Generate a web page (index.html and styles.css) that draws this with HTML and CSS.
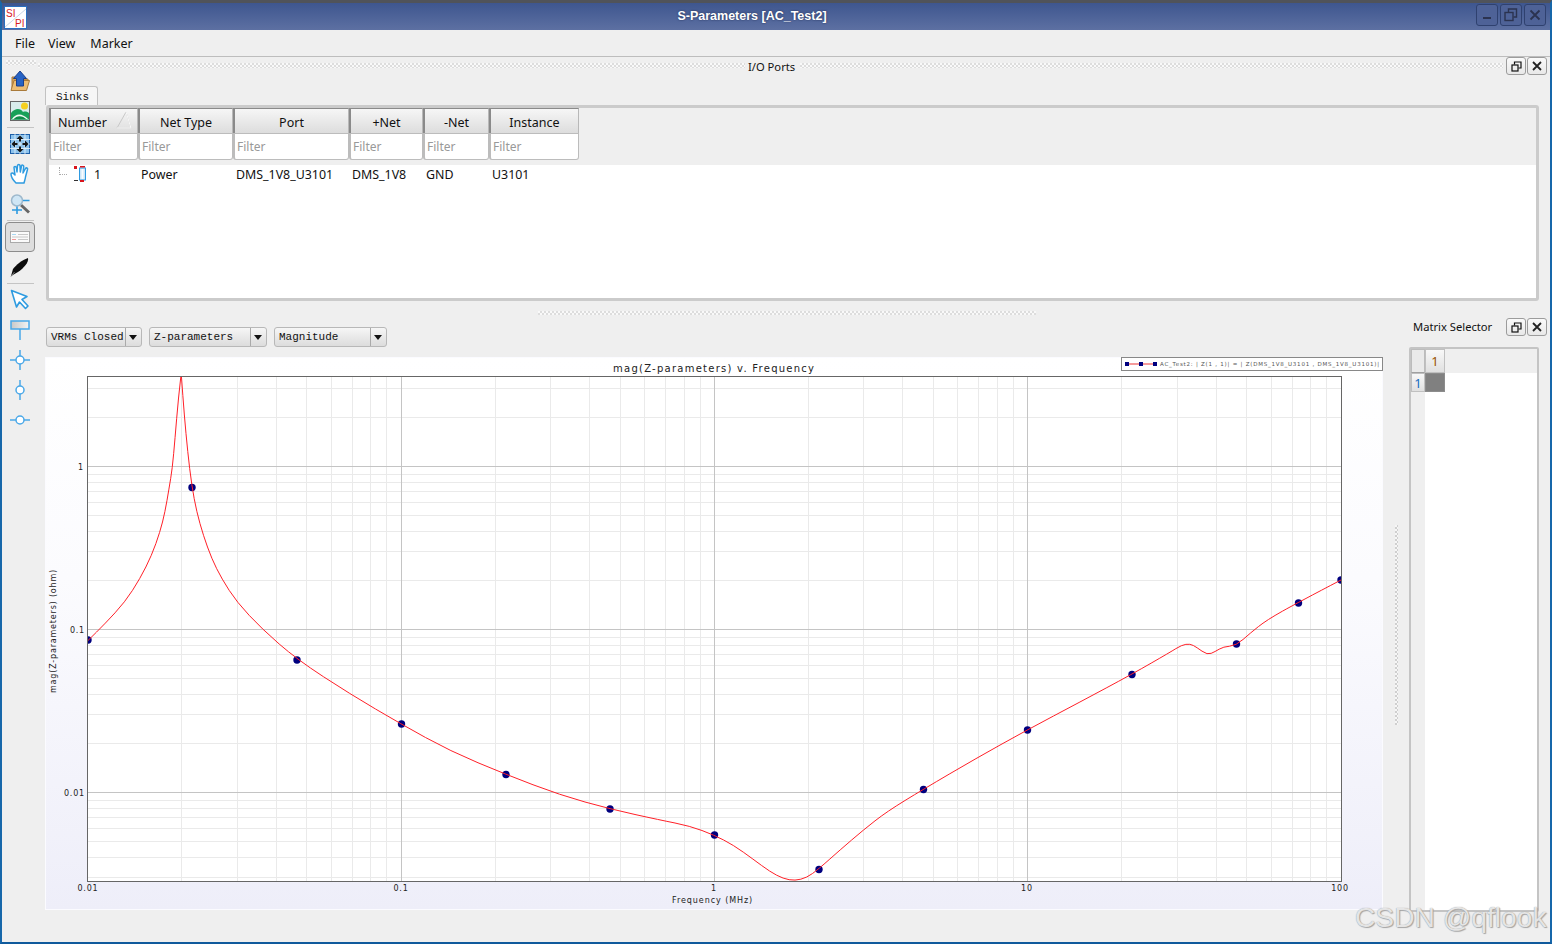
FILE: index.html
```html
<!DOCTYPE html>
<html lang="en">
<head>
<meta charset="utf-8">
<title>S-Parameters [AC_Test2]</title>
<link rel="stylesheet" href="styles.css">
</head>
<body>
<div class="window">
  <header class="titlebar">
    <svg class="applogo" width="23" height="23" viewBox="0 0 23 23">
      <rect x="0.5" y="0.5" width="22" height="22" fill="#fff" stroke="#2a6fc0"/>
      <path d="M1 21 L22 3" stroke="#c8d4e4" stroke-width="1"/>
      <text x="2" y="11" class="logotext">SI</text>
      <text x="11" y="21" class="logotext">PI</text>
    </svg>
    <div class="apptitle">S-Parameters [AC_Test2]</div>
    <div class="winbtns">
      <button class="winbtn"><svg width="12" height="12" viewBox="0 0 12 12"><rect x="2" y="8" width="8" height="2" fill="#2b3350"/></svg></button>
      <button class="winbtn"><svg width="14" height="14" viewBox="0 0 14 14" fill="none" stroke="#2b3350" stroke-width="1.4"><rect x="1" y="4.5" width="8" height="8"/><path d="M4.5 4 V1 H12.5 V9 H9.5"/></svg></button>
      <button class="winbtn"><svg width="12" height="12" viewBox="0 0 12 12" fill="none" stroke="#2b3350" stroke-width="1.8"><path d="M1.5 1.5 L10.5 10.5 M10.5 1.5 L1.5 10.5"/></svg></button>
    </div>
  </header>

  <nav class="menubar">
    <span class="menuitem">File</span>
    <span class="menuitem">View</span>
    <span class="menuitem">Marker</span>
  </nav>

  <div class="main">
    <aside class="toolbar">
      <div class="handle toolhandle"></div>
      <div class="tool"><svg width="20" height="22" viewBox="0 0 20 22"><path d="M2 20.5 V7 H7 L9 9 H18 V12 Z" fill="#d9a050" stroke="#a97a3a"/><path d="M1 20.5 L4 10.5 H19.5 L16.5 20.5 Z" fill="#ecbd74" stroke="#a97a3a"/><path d="M10 1 L16.5 8.5 H13.5 V16 H6.5 V8.5 H3.5 Z" fill="#2763c4" stroke="#1b3f8a"/></svg></div>
      <div class="tool"><svg width="20" height="20" viewBox="0 0 20 20"><rect x="0.5" y="0.5" width="19" height="19" fill="#d8ecec" stroke="#666"/><circle cx="14.5" cy="5" r="3.5" fill="#f5d020"/><path d="M1 18.5 V12 C6 6 11 8 13 11 C15 10 18 11 19 12 V18.5 Z" fill="#18a058"/><path d="M2 18 C6 12 12 12 18 18 Z" fill="#f4fbf6"/><path d="M3 18.5 C7 14 12 14 17 18.5 Z" fill="#0f8a48"/></svg></div>
      <div class="toolsep"></div>
      <div class="tool"><svg width="20" height="20" viewBox="0 0 20 20"><rect x="0.5" y="0.5" width="19" height="19" fill="#8ec3ec" stroke="#1d5fa8"/><path d="M0 5.5 H20 M0 10 H20 M0 14.5 H20 M5 0 V20 M10 0 V20 M15 0 V20" stroke="#eaf4fb" stroke-width="0.8"/><path d="M10 1.5 L13.5 5 H11 V7.5 H9 V5 H6.5 Z M10 18.5 L13.5 15 H11 V12.5 H9 V15 H6.5 Z M1.5 10 L5 6.5 V9 H7.5 V11 H5 V13.5 Z M18.5 10 L15 6.5 V9 H12.5 V11 H15 V13.5 Z" fill="#151515"/></svg></div>
      <div class="tool"><svg width="20" height="22" viewBox="0 0 20 22"><path d="M6 20 C3 17 1 13 1 11 C1 9.5 3 9.5 4 11 L5 12 L4 4.5 C4 3 6 3 6.3 4.5 L7 9 L7.5 2.5 C7.8 1 9.7 1 10 2.5 L10.3 9 L11.5 3 C12 1.5 13.8 2 13.7 3.5 L13 10 L15.5 5.5 C16.3 4.3 18 5 17.5 6.5 L15.5 14 C15 17 14.5 18 14 20 Z" fill="#fff" stroke="#2e9be0" stroke-width="1.5" stroke-linejoin="round"/></svg></div>
      <div class="tool"><svg width="20" height="21" viewBox="0 0 20 21"><path d="M11 11 L19 18.5" stroke="#666" stroke-width="3"/><circle cx="7" cy="6.5" r="5.5" fill="#cfe6f5" stroke="#9db8cc" stroke-width="1.5"/><path d="M13 6.5 H19.5 M2 16 H12 M7 12.5 V20" stroke="#2e9be0" stroke-width="1.6"/></svg></div>
      <div class="toolsep"></div>
      <div class="tool active"><svg width="20" height="12" viewBox="0 0 20 12"><rect x="0.5" y="0.5" width="19" height="11" fill="#fbfbfb" stroke="#aaa"/><path d="M2 3.5 H6" stroke="#a8d8f4"/><path d="M8 3.5 H18 M2 6 H18 M8 8.5 H18" stroke="#c8c8c8"/><path d="M2 8.5 H6" stroke="#f49898"/></svg></div>
      <div class="tool"><svg width="20" height="22" viewBox="0 0 20 22"><path d="M1 20 L3 13 C6 9 12 4 18 2 C19 6 14 12 8 16 Z" fill="#0c0c0c"/><path d="M1 20.5 L4.5 16" stroke="#777"/></svg></div>
      <div class="toolsep"></div>
      <div class="tool"><svg width="20" height="23" viewBox="0 0 20 23"><path d="M1.5 1.5 L17 7.5 L12 10.5 L18 17 L15.5 19.5 L9.5 13 L6.5 18 Z" fill="#fff" stroke="#2e9be0" stroke-width="1.6" stroke-linejoin="round"/></svg></div>
      <div class="tool"><svg width="20" height="20" viewBox="0 0 20 20"><defs><linearGradient id="tbar" x1="0" x2="1" y1="0" y2="0"><stop offset="0" stop-color="#c8c8c8"/><stop offset="1" stop-color="#f4f4f4"/></linearGradient></defs><rect x="1" y="1" width="18" height="8" fill="url(#tbar)" stroke="#4aa8e8" stroke-width="1.5"/><path d="M10 9 V20" stroke="#4aa8e8" stroke-width="1.5"/></svg></div>
      <div class="tool"><svg width="20" height="20" viewBox="0 0 20 20"><path d="M0 10 H20 M10 0 V20" stroke="#4aa8e8" stroke-width="1.5"/><circle cx="10" cy="10" r="4" fill="#fff" stroke="#4aa8e8" stroke-width="1.5"/></svg></div>
      <div class="tool"><svg width="20" height="20" viewBox="0 0 20 20"><path d="M10 0 V20" stroke="#4aa8e8" stroke-width="1.5"/><circle cx="10" cy="10" r="4" fill="#fff" stroke="#4aa8e8" stroke-width="1.5"/></svg></div>
      <div class="tool"><svg width="20" height="20" viewBox="0 0 20 20"><path d="M0 10 H20" stroke="#4aa8e8" stroke-width="1.5"/><circle cx="10" cy="10" r="4" fill="#fff" stroke="#4aa8e8" stroke-width="1.5"/></svg></div>
    </aside>

    <div class="content">
      <div class="dockhead">
        <div class="handle handle-left"></div>
        <span class="docktitle">I/O Ports</span>
        <div class="handle grow"></div>
        <div class="dockbtns">
          <button class="dockbtn"><svg width="11" height="11" viewBox="0 0 11 11" fill="none" stroke="#111" stroke-width="1.2"><rect x="1" y="4" width="6" height="6"/><path d="M3.5 3.5 V1 H10 V7 H7.5"/></svg></button>
          <button class="dockbtn"><svg width="10" height="10" viewBox="0 0 10 10" fill="none" stroke="#222" stroke-width="1.8"><path d="M1 1 L9 9 M9 1 L1 9"/></svg></button>
        </div>
      </div>

      <div class="tabs"><div class="tab">Sinks</div></div>

      <section class="tableframe">
        <div class="thead">
          <div class="col col-number">
            <div class="th th-left">Number<svg class="sort" width="16" height="18" viewBox="0 0 16 18"><path d="M1 17 L10 1 L15 17 Z" fill="none" stroke="#c8c8c8"/><path d="M1 17 L15 17 L10 1" fill="none" stroke="#fafafa"/></svg></div>
            <div class="filter">Filter</div>
          </div>
          <div class="col col-type"><div class="th">Net Type</div><div class="filter">Filter</div></div>
          <div class="col col-port"><div class="th">Port</div><div class="filter">Filter</div></div>
          <div class="col col-pnet"><div class="th">+Net</div><div class="filter">Filter</div></div>
          <div class="col col-nnet"><div class="th">-Net</div><div class="filter">Filter</div></div>
          <div class="col col-inst"><div class="th">Instance</div><div class="filter">Filter</div></div>
        </div>
        <div class="tbody">
          <div class="row">
            <div class="cell col-number cell-first">
              <span class="treeline"></span>
              <svg class="sinkicon" width="14" height="16" viewBox="0 0 14 16"><rect x="6.5" y="2" width="6" height="12" fill="#cfe6f7" stroke="#2f9ae0"/><rect x="8.5" y="3" width="2" height="10" fill="#f8fcff"/><rect x="1" y="0" width="3" height="3" fill="#d8141c"/><rect x="7" y="0" width="5" height="1.5" fill="#d8141c"/><rect x="7" y="14" width="4" height="2" fill="#d8141c"/><rect x="1" y="14" width="4" height="1" fill="#333"/></svg>
              <span>1</span>
            </div>
            <div class="cell col-type">Power</div>
            <div class="cell col-port">DMS_1V8_U3101</div>
            <div class="cell col-pnet">DMS_1V8</div>
            <div class="cell col-nnet">GND</div>
            <div class="cell col-inst">U3101</div>
          </div>
        </div>
      </section>

      <div class="splitter"><div class="handle splithandle"></div></div>

      <div class="lower">
        <div class="plotcol">
          <div class="combos">
            <div class="combo combo-vrm"><span class="combotext">VRMs Closed</span><span class="comboarrow"></span></div>
            <div class="combo combo-z"><span class="combotext">Z-parameters</span><span class="comboarrow"></span></div>
            <div class="combo combo-mag"><span class="combotext">Magnitude</span><span class="comboarrow"></span></div>
          </div>
          <div class="plot">
            <svg class="plotsvg" width="1338" height="553" viewBox="45 357 1338 553">
              <defs>
                <clipPath id="plotclip"><rect x="87" y="376" width="1254" height="505"/></clipPath>
                <g id="xd" stroke="#eaeaea" shape-rendering="crispEdges">
                  <path d="M94.3 376 V881 M149.5 376 V881 M188.7 376 V881 M219.1 376 V881 M243.9 376 V881 M264.8 376 V881 M283 376 V881 M299 376 V881"/>
                </g>
                <g id="yd" stroke="#eaeaea" shape-rendering="crispEdges">
                  <path d="M88 -49 H1341 M88 -77.8 H1341 M88 -98.1 H1341 M88 -113.9 H1341 M88 -126.8 H1341 M88 -137.8 H1341 M88 -147.2 H1341 M88 -155.5 H1341"/>
                </g>
              </defs>
              <rect x="87.5" y="376.5" width="1254" height="505" fill="#fff"/>
              <g clip-path="url(#plotclip)">
                <use href="#xd" x="87.5"/><use href="#xd" x="401"/><use href="#xd" x="714"/><use href="#xd" x="1027.5"/>
                <use href="#yd" y="466.5"/><use href="#yd" y="629.5"/><use href="#yd" y="792.5"/><use href="#yd" y="955.5"/>
                <path d="M401.5 376 V881 M714.5 376 V881 M1027.5 376 V881 M88 466.5 H1341 M88 629.5 H1341 M88 792.5 H1341" stroke="#c4c4c4" shape-rendering="crispEdges"/>
                <g fill="#00007f">
                  <circle cx="88" cy="640" r="3.7"/><circle cx="192" cy="487.5" r="3.7"/><circle cx="297" cy="660" r="3.7"/><circle cx="401.5" cy="724" r="3.7"/><circle cx="506" cy="774.5" r="3.7"/><circle cx="610" cy="809" r="3.7"/><circle cx="714.5" cy="835" r="3.7"/><circle cx="819" cy="869.5" r="3.7"/><circle cx="923.5" cy="789.5" r="3.7"/><circle cx="1027.5" cy="730" r="3.7"/><circle cx="1132" cy="674.5" r="3.7"/><circle cx="1236.5" cy="644" r="3.7"/><circle cx="1298.5" cy="603" r="3.7"/><circle cx="1341" cy="580" r="3.7"/>
                </g>
                <path class="curve" d="M88 640.5 L96.5 632.1 Q105 623.7 115 612.85 Q125 602 132.5 590.35 Q140 578.7 145.85 567 Q151.7 555.3 155.85 543.65 Q160 532 162.5 522 Q165 512 167 500.35 Q169 488.7 170.65 478.7 Q172.3 468.7 173.65 453.7 Q175 438.7 176.65 418.7 Q178.3 398.7 180.9 376 L181.4 376 L182.85 395.65 Q184.3 415.3 186 433.65 Q187.7 452 189.7 468.65 Q191.7 485.3 194.2 498.65 Q196.7 512 200 523.65 Q203.3 535.3 207.5 547 Q211.7 558.7 216.7 568.7 Q221.7 578.7 229.2 590.35 Q236.7 602 249.2 615.35 Q261.7 628.7 279.2 644 Q296.7 659.3 323.35 676.65 Q350 694 375.5 709 Q401 724 425.5 737.5 Q450 751 478 762.75 Q506 774.5 533 784.75 Q560 795 585 802 Q610 809 635 814.5 Q660 820 675 823 Q690 826 702 830.5 Q714 835 723.65 840 Q733.3 845 743.3 852.15 Q753.3 859.3 761.65 865.5 Q770 871.7 776.65 875.2 Q783.3 878.7 789.15 879.7 Q795 880.7 800.85 879.2 Q806.7 877.7 812.5 873.5 Q818.3 869.3 829.15 859.65 Q840 850 851.65 840 Q863.3 830 875 820.85 Q886.7 811.7 905 800.5 Q923.3 789.3 949.15 774.15 Q975 759 1001 744.5 Q1027 730 1053.5 716 Q1080 702 1106.15 688 Q1132.3 674 1151.15 663.15 Q1170 652.3 1175.85 648.65 Q1181.7 645 1185.85 644.35 Q1190 643.7 1193.35 645.5 Q1196.7 647.3 1202 651.15 Q1207.3 655 1211.15 653.35 Q1215 651.7 1219.15 649.2 Q1223.3 646.7 1229.65 646.2 Q1236 645.7 1243 639.5 Q1250 633.3 1258.35 626.65 Q1266.7 620 1282.5 611.15 Q1298.3 602.3 1341 580"/>
              </g>
              <rect x="87.5" y="376.5" width="1254" height="505" fill="none" stroke="#666" shape-rendering="crispEdges"/>

              <g class="charttext">
                <text x="613" y="372" class="ctitle" textLength="202">mag(Z-parameters) v. Frequency</text>
                <text x="84" y="470" text-anchor="end">1</text>
                <text x="85" y="633" text-anchor="end">0.1</text>
                <text x="85" y="796" text-anchor="end">0.01</text>
                <text x="88" y="891" text-anchor="middle">0.01</text>
                <text x="401" y="891" text-anchor="middle">0.1</text>
                <text x="714" y="891" text-anchor="middle">1</text>
                <text x="1027" y="891" text-anchor="middle">10</text>
                <text x="1340" y="891" text-anchor="middle">100</text>
                <text x="672" y="903" textLength="81">Frequency (MHz)</text>
                <text transform="translate(56 693) rotate(-90)" textLength="124">mag(Z-parameters) (ohm)</text>
              </g>

              <rect x="1121.5" y="357.5" width="261" height="13" fill="#fff" stroke="#888" shape-rendering="crispEdges"/>
              <path d="M1126 364 H1156" stroke="#f59a9a" stroke-width="2"/>
              <path d="M1125 362 h4 v4 h-4 Z M1139 362 h4 v4 h-4 Z M1153 362 h4 v4 h-4 Z" fill="#00007f"/>
              <text x="1160" y="366" class="legendtext" textLength="219">AC_Test2: | Z(1 , 1)| = | Z(DMS_1V8_U3101 , DMS_1V8_U3101)|</text>
            </svg>
          </div>
        </div>

        <div class="vsplit"><div class="vhandle"></div></div>

        <div class="matrixcol">
          <div class="matrixhead">
            <span class="matrixtitle">Matrix Selector</span>
            <div class="dockbtns">
              <button class="dockbtn"><svg width="11" height="11" viewBox="0 0 11 11" fill="none" stroke="#111" stroke-width="1.2"><rect x="1" y="4" width="6" height="6"/><path d="M3.5 3.5 V1 H10 V7 H7.5"/></svg></button>
              <button class="dockbtn"><svg width="10" height="10" viewBox="0 0 10 10" fill="none" stroke="#222" stroke-width="1.8"><path d="M1 1 L9 9 M9 1 L1 9"/></svg></button>
            </div>
          </div>
          <div class="matrix">
            <div class="mrow mrow-top">
              <div class="mcorner"></div>
              <div class="mhead mhead-col">1</div>
            </div>
            <div class="mrow-body">
              <div class="mleft"><div class="mhead mhead-row">1</div></div>
              <div class="mcell"></div>
            </div>
          </div>
        </div>
      </div>
    </div>
  </div>
</div>
<div class="watermark">CSDN @qflook</div>
</body>
</html>
```
FILE: styles.css
```css
* { box-sizing: border-box; }
html, body { margin: 0; padding: 0; }
body {
  width: 1552px;
  height: 944px;
  overflow: hidden;
  background: #efefef;
  font-family: "Noto Sans", "Liberation Sans", sans-serif;
  font-size: 12px;
  color: #111;
  position: relative;
}
button { padding: 0; margin: 0; font: inherit; }

.window {
  width: 1552px;
  height: 944px;
  display: flex;
  flex-direction: column;
  border-style: solid;
  border-color: #50535a #1767aa #0f5a9c #1767aa;
  border-width: 3px 2px 2px 2px;
  background: #efefef;
}

/* title bar */
.titlebar {
  height: 27px;
  flex: none;
  display: flex;
  align-items: center;
  background: linear-gradient(#3e568f, #5d70a2);
  padding-left: 2px;
}
.applogo { flex: none; margin-top: 1px; }
.logotext {
  font-family: "Liberation Sans", sans-serif;
  font-size: 10px;
  fill: #d81c24;
}
.apptitle {
  flex: 1;
  text-align: center;
  padding-left: 1px;
  padding-bottom: 1px;
  color: #fff;
  font-family: "Liberation Sans", sans-serif;
  font-weight: bold;
  font-size: 12.5px;
  text-shadow: 0 0 2px #202c50;
}
.winbtns { display: flex; gap: 2px; margin-right: 4px; margin-top: -3px; }
.winbtn {
  width: 22px;
  height: 22px;
  display: flex;
  align-items: center;
  justify-content: center;
  background: #4e6297;
  border: 1px solid #2f416f;
  border-radius: 3px;
}

/* menu */
.menubar {
  height: 27px;
  flex: none;
  display: flex;
  align-items: center;
  border-bottom: 1px solid #bdbdbd;
  padding-left: 13px;
  font-size: 12.5px;
  gap: 15px;
}
.menuitem:first-child { width: 18px; }

/* main */
.main { flex: 1; display: flex; min-height: 0; }

.toolbar {
  width: 36px;
  flex: none;
  display: flex;
  flex-direction: column;
  align-items: center;
  padding-top: 3px;
}
.handle {
  height: 5px;
  background: repeating-conic-gradient(#dddddd 0 25%, #f9f9f9 0 50%) 0 0 / 4px 4px;
}
.toolhandle { width: 30px; margin-bottom: 1px; flex: none; margin-left: 2px; }
.tool {
  width: 30px;
  height: 30px;
  flex: none;
  display: flex;
  align-items: center;
  justify-content: center;
}
.tool.active {
  background: #dedede;
  border: 1px solid #8c8c8c;
  border-radius: 4px;
}
.toolsep {
  width: 27px;
  height: 3px;
  flex: none;
  background: linear-gradient(transparent 1px, #c4c4c4 1px, #c4c4c4 2px, transparent 2px);
}

.content { flex: 1; min-width: 0; display: flex; flex-direction: column; }

.dockhead {
  height: 29px;
  flex: none;
  display: flex;
  align-items: flex-start;
  padding-right: 3px;
}
.handle.handle-left { width: 707px; flex: none; margin-top: 6px; }
.handle.grow { flex: 1; margin-top: 6px; }
.docktitle {
  font-size: 11.2px;
  line-height: 16px;
  margin: 2px 5px 0 3px;
}
.dockbtns { display: flex; gap: 1px; margin-left: 3px; }
.dockbtn {
  width: 20px;
  height: 18px;
  display: flex;
  align-items: center;
  justify-content: center;
  background: linear-gradient(#fafafa, #e8e8e8);
  border: 1px solid #9c9c9c;
  border-radius: 3px;
}

/* tabs */
.tabs { height: 19px; flex: none; padding-left: 7px; display: flex; }
.tab {
  width: 53px;
  height: 19px;
  font-family: "Liberation Mono", monospace;
  font-size: 11px;
  line-height: 20px;
  padding-left: 10px;
  background: #f6f6f6;
  border: 1px solid #c2c2c2;
  border-bottom: none;
  border-radius: 3px 3px 0 0;
}

/* table */
.tableframe {
  width: 1493px;
  height: 196px;
  flex: none;
  margin-left: 8px;
  border: 3px solid #cbcbcb;
  border-radius: 3px;
  display: flex;
  flex-direction: column;
}
.thead { height: 57px; flex: none; display: flex; }
.col { display: flex; flex-direction: column; }
.col-number { width: 89px; }
.col-type { width: 95px; }
.col-port { width: 116px; }
.col-pnet { width: 74px; }
.col-nnet { width: 66px; }
.col-inst { width: 90px; }
.th {
  height: 25px;
  flex: none;
  display: flex;
  align-items: center;
  justify-content: center;
  font-size: 12.5px;
  background: linear-gradient(#f6f6f6, #dddddd);
  border-top: 1px solid #8a8a8a;
  border-left: 2px solid #8a8a8a;
  border-right: 1px solid #b8b8b8;
  padding-top: 2px;
}
.th-left { justify-content: flex-start; padding-left: 7px; position: relative; }
.sort { position: absolute; left: 65px; top: 2px; }
.filter {
  height: 27px;
  flex: none;
  background: #fff;
  border: 1px solid #bcbcbc;
  border-left-width: 2px;
  border-radius: 0 0 3px 3px;
  color: #999;
  font-size: 12px;
  line-height: 26px;
  padding-left: 2px;
}
.tbody { flex: 1; background: #fff; }
.row { display: flex; height: 18px; }
.cell {
  font-size: 12.4px;
  line-height: 19px;
  padding-left: 3px;
  flex: none;
  white-space: nowrap;
}
.cell-first { display: flex; padding-left: 10px; }
.treeline {
  width: 8px;
  height: 8px;
  margin-top: 2px;
  border-left: 1px dotted #aaa;
  border-bottom: 1px dotted #aaa;
  flex: none;
}
.sinkicon { margin: 1px 7px 0 6px; flex: none; }

/* splitter */
.splitter { height: 17px; flex: none; display: flex; justify-content: center; padding-top: 10px; }
.splithandle { width: 498px; height: 4px; margin-right: 14px; }

/* lower */
.lower { flex: 1; display: flex; min-height: 0; padding-left: 7px; }
.plotcol { width: 1338px; flex: none; display: flex; flex-direction: column; padding-top: 9px; }
.combos { height: 20px; flex: none; display: flex; gap: 7px; padding-left: 1px; margin-bottom: 10px; }
.combo {
  height: 20px;
  display: flex;
  background: linear-gradient(#f6f6f6, #dcdcdc);
  border: 1px solid #b8b8b8;
  border-radius: 3px;
  font-family: "Liberation Mono", monospace;
  font-size: 11px;
  line-height: 19px;
}
.combo-vrm { width: 96px; }
.combo-z { width: 118px; }
.combo-mag { width: 113px; }
.combotext { flex: 1; padding-left: 4px; white-space: nowrap; overflow: hidden; }
.comboarrow {
  width: 16px;
  flex: none;
  border-left: 1px solid #aaaaaa;
  position: relative;
}
.comboarrow::after {
  content: "";
  position: absolute;
  left: 3px;
  top: 7px;
  border-style: solid;
  border-width: 5px 4px 0 4px;
  border-color: #111 transparent transparent transparent;
}
.plot {
  width: 1338px;
  height: 553px;
  flex: none;
  background: linear-gradient(#ffffff 0%, #fbfbfe 40%, #eeeef9 100%);
  box-shadow: inset 0 0 0 1px #fbfbff;
}
.plotsvg { display: block; }
.curve { fill: none; stroke: #ff2028; stroke-width: 1; stroke-linejoin: round; }
.charttext text {
  font-family: "DejaVu Sans", sans-serif;
  font-size: 8px;
  letter-spacing: 0.8px;
  fill: #222;
}
.charttext text.ctitle { font-size: 10px; letter-spacing: 1px; }
.legendtext {
  font-family: "DejaVu Sans", sans-serif;
  font-size: 5.5px;
  fill: #555;
}

.vsplit { width: 26px; flex: none; display: flex; justify-content: center; padding-top: 207px; }
.vhandle {
  width: 3px;
  height: 200px;
  background: repeating-conic-gradient(#cfcfcf 0 25%, #f6f6f6 0 50%) 0 0 / 4px 4px;
}

/* matrix */
.matrixcol { width: 140px; flex: none; display: flex; flex-direction: column; }
.matrixhead { height: 29px; flex: none; display: flex; align-items: flex-start; padding-left: 4px; }
.matrixtitle { width: 90px; font-size: 11.2px; line-height: 18px; }
.matrixhead .dockbtns { margin-left: 3px; }
.matrix {
  width: 130px;
  height: 565px;
  flex: none;
  border: 2px solid #c4c4c4;
  border-radius: 2px;
  display: flex;
  flex-direction: column;
}
.mrow { display: flex; }
.mrow-top { height: 24px; flex: none; }
.mcorner {
  width: 14px;
  background: #eaeaea;
  border: 1px solid #bcbcbc;
  border-bottom-color: #a0a0a0;
}
.mhead {
  display: flex;
  align-items: center;
  justify-content: center;
  font-size: 13px;
  background: linear-gradient(#f8f8f8, #e0e0e0);
  border: 1px solid #c0c0c0;
}
.mhead-col { width: 20px; color: #9a5000; }
.mrow-body { flex: 1; display: flex; background: #fff; }
.mleft { width: 14px; flex: none; background: #efefef; }
.mhead-row { height: 19px; color: #1a6cc0; }
.mcell { width: 20px; height: 19px; flex: none; background: #808080; border: 1px solid #8c8c8c; }

/* watermark overlay */
.watermark {
  position: absolute;
  left: 1355px;
  top: 899px;
  font-family: "Liberation Sans", sans-serif;
  font-size: 28.2px;
  line-height: 36px;
  white-space: nowrap;
  color: rgba(245, 245, 245, 0.85);
  text-shadow: 0 0 1px #8a8a8a, 1px 1px 1px #a8a8a8;
}
```
